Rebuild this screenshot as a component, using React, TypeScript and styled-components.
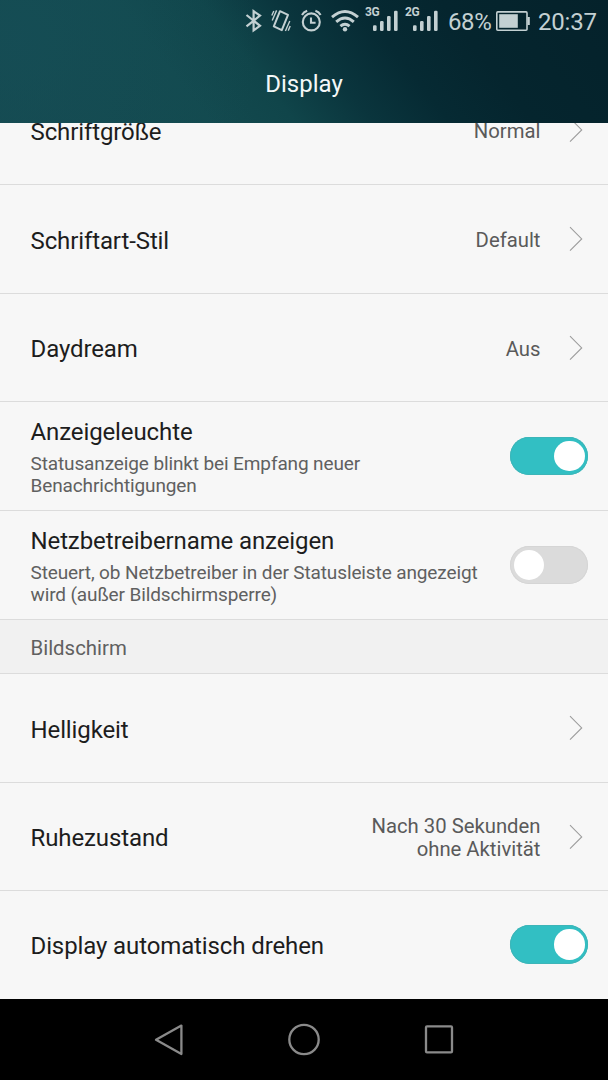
import React from "react";
import styled, { createGlobalStyle } from "styled-components";

const GlobalStyle = createGlobalStyle`
  * { box-sizing: border-box; }
  body { margin: 0; background: #000; font-family: Roboto, "Liberation Sans", sans-serif; }
`;

const Screen = styled.div`
  width: 608px;
  height: 1080px;
  display: flex;
  flex-direction: column;
  overflow: hidden;
  background: #f7f7f7;
`;

const Header = styled.header`
  flex: none;
  height: 123px;
  display: flex;
  flex-direction: column;
  background:
    radial-gradient(ellipse 240px 260px at 20px 40px, rgba(22, 80, 90, 0.5), rgba(22, 80, 90, 0) 100%),
    linear-gradient(52deg, #15494f 0%, #134a4f 30%, #10454a 42%, #0a353d 53%, #062a33 64%, #05252e 76%, #05222b 100%);
`;

const StatusBar = styled.div`
  height: 43px;
  padding: 0 11px 0 245px;
  display: flex;
  align-items: flex-start;
  color: #c3d0d2;
`;

const StatusIcon = styled.svg<{ $gap?: number }>`
  flex: none;
  display: block;
  margin-right: ${(p) => p.$gap ?? 0}px;
  overflow: visible;
`;

const Signal = styled.div<{ $gap: number }>`
  flex: none;
  width: 33px;
  height: 32px;
  display: flex;
  margin-right: ${(p) => p.$gap}px;
`;

const Network = styled.span`
  width: 8px;
  padding-top: 6px;
  font-size: 12px;
  font-weight: 700;
  line-height: 13px;
  letter-spacing: -0.4px;
  white-space: nowrap;
`;

const StatusText = styled.span<{ $width: number; $spacing: number }>`
  flex: none;
  width: ${(p) => p.$width}px;
  padding-top: 8px;
  font-size: 24px;
  font-weight: 400;
  line-height: 28px;
  letter-spacing: ${(p) => p.$spacing}px;
  white-space: nowrap;
`;

const Title = styled.h1`
  margin: 0;
  padding-top: 26px;
  color: #f4f8f8;
  font-size: 24px;
  font-weight: 400;
  line-height: 30px;
  text-align: center;
`;

const List = styled.main`
  flex: none;
  height: 876px;
  display: flex;
  flex-direction: column;
  justify-content: flex-end;
  overflow: hidden;
`;

const Row = styled.section<{ $height: number; $last?: boolean }>`
  flex: none;
  height: ${(p) => p.$height}px;
  padding: 0 20px 0 30.5px;
  display: flex;
  align-items: center;
  justify-content: space-between;
  border-bottom: 1px solid ${(p) => (p.$last ? "#f7f7f7" : "#dcdcdc")};
`;

const Texts = styled.div`
  display: flex;
  flex-direction: column;
  padding-top: 3px;
`;

const Label = styled.div`
  color: #1d1d1d;
  font-size: 24px;
  line-height: 30px;
  letter-spacing: -0.11px;
  white-space: nowrap;
`;

const Description = styled.div`
  padding: 6px 0 2px;
  color: #606060;
  font-size: 19px;
  line-height: 22px;
  letter-spacing: -0.12px;
  white-space: pre;
`;

const Side = styled.div`
  display: flex;
  align-items: center;
`;

const Value = styled.div`
  padding-top: 3px;
  color: #5a5a5a;
  font-size: 20.3px;
  line-height: 23px;
  text-align: right;
  white-space: pre;
`;

const Arrow = styled.svg`
  display: block;
  margin: 0 5px 0 28.5px;
`;

const Toggle = styled.div<{ $on: boolean }>`
  width: 78px;
  height: 38.5px;
  padding: 0 3.5px;
  border-radius: 20px;
  display: flex;
  align-items: center;
  justify-content: ${(p) => (p.$on ? "flex-end" : "flex-start")};
  background: ${(p) => (p.$on ? "#32bfc3" : "#dbdbdb")};
  box-shadow: inset 0 0 0 1px ${(p) => (p.$on ? "#3db5b8" : "#d5d5d5")};
`;

const Knob = styled.div`
  width: 30.5px;
  height: 30.5px;
  border-radius: 50%;
  background: #fff;
`;

const Section = styled.h2`
  flex: none;
  margin: 0;
  height: 54px;
  padding: 2px 30.5px 0;
  display: flex;
  align-items: center;
  background: #f1f1f1;
  border-bottom: 1px solid #dcdcdc;
  color: #606060;
  font-size: 20.4px;
  font-weight: 400;
`;

const NavBar = styled.nav`
  flex: none;
  height: 81px;
  display: flex;
  align-items: center;
  justify-content: center;
  gap: 101px;
  background: #000;
`;

const NavIcon = styled.svg`
  display: block;
  width: 34px;
  height: 33px;
  fill: none;
  stroke: #8a8a8a;
  stroke-width: 2.3;
  stroke-linejoin: round;
`;

const Chevron = () => (
  <Arrow width="14" height="26" viewBox="0 0 14 26" fill="none" stroke="#9c9c9c" strokeWidth="1.1">
    <path d="M1 1.2L12.7 12.9L1 24.6" />
  </Arrow>
);

const Bars = () => (
  <StatusIcon width="25" height="32" viewBox="0 0 25 32" fill="currentColor">
    <rect x="0" y="25.3" width="3.6" height="5.7" rx="1.2" />
    <rect x="7" y="21" width="3.6" height="10" rx="1.2" />
    <rect x="14" y="16" width="3.6" height="15" rx="1.2" />
    <rect x="21" y="10.7" width="3.6" height="20.3" rx="1.2" />
  </StatusIcon>
);

interface Setting {
  label: string;
  height: number;
  description?: string;
  value?: string;
  on?: boolean;
  last?: boolean;
}

const general: Setting[] = [
  { label: "Schriftgröße", value: "Normal", height: 109 },
  { label: "Schriftart-Stil", value: "Default", height: 109 },
  { label: "Daydream", value: "Aus", height: 108 },
  {
    label: "Anzeigeleuchte",
    description: "Statusanzeige blinkt bei Empfang neuer\nBenachrichtigungen",
    on: true,
    height: 109,
  },
  {
    label: "Netzbetreibername anzeigen",
    description: "Steuert, ob Netzbetreiber in der Statusleiste angezeigt\nwird (außer Bildschirmsperre)",
    on: false,
    height: 109,
  },
];

const display: Setting[] = [
  { label: "Helligkeit", height: 109 },
  { label: "Ruhezustand", value: "Nach 30 Sekunden\nohne Aktivität", height: 108 },
  { label: "Display automatisch drehen", on: true, height: 108, last: true },
];

const SettingRow = ({ label, description, value, on, height, last }: Setting) => (
  <Row $height={height} $last={last}>
    <Texts>
      <Label>{label}</Label>
      {description && <Description>{description}</Description>}
    </Texts>
    {on === undefined ? (
      <Side>
        {value && <Value>{value}</Value>}
        <Chevron />
      </Side>
    ) : (
      <Toggle $on={on}>
        <Knob />
      </Toggle>
    )}
  </Row>
);

export default function App() {
  return (
    <>
      <GlobalStyle />
      <Screen>
        <Header>
          <StatusBar>
            <StatusIcon $gap={9} width="17" height="40" viewBox="0 0 17 40" fill="none" stroke="currentColor" strokeWidth="2.2">
              <path d="M1.5 15L15 25.8L8.6 30.4V11.2L15 15.6L1.5 26.4" />
            </StatusIcon>
            <StatusIcon $gap={10} width="20" height="40" viewBox="0 0 20 40" fill="none" stroke="currentColor">
              <path strokeWidth="2" strokeLinejoin="round" d="M9 11.2L17 14.9L10.8 30.1L2.8 26.4Z" />
              <path strokeWidth="1.4" d="M5.6 10.4L1.2 20.5M2.8 11L.8 15.5M18.8 21L14.4 31M19.2 26L17.2 30.6" />
            </StatusIcon>
            <StatusIcon $gap={9} width="21" height="40" viewBox="0 0 21 40" fill="none" stroke="currentColor" strokeWidth="2.1">
              <circle cx="10.3" cy="21.9" r="8.5" />
              <path d="M10 17.5V22.7H14.6M1 15Q2.6 12 6.2 10.8M14.4 10.8Q18 12 19.6 15" />
            </StatusIcon>
            <StatusIcon $gap={6} width="28" height="40" viewBox="0 0 28 40" fill="none" stroke="currentColor" strokeWidth="2.9">
              <path d="M1 17.2Q14 5.8 27 17.2M5.2 21.8Q14 14 22.8 21.8M9.4 26.2Q14 22.4 18.6 26.2" />
              <circle cx="14" cy="29.3" r="2.2" fill="currentColor" stroke="none" />
            </StatusIcon>
            <Signal $gap={7}>
              <Network>3G</Network>
              <Bars />
            </Signal>
            <Signal $gap={10}>
              <Network>2G</Network>
              <Bars />
            </Signal>
            <StatusText $width={48} $spacing={-0.4}>68%</StatusText>
            <StatusIcon $gap={8} width="34" height="40" viewBox="0 0 34 40" fill="none">
              <rect x="0.8" y="11.9" width="30.2" height="18.3" rx="1" stroke="currentColor" strokeWidth="1.6" />
              <rect x="3.2" y="14.2" width="18.6" height="13.6" fill="currentColor" />
              <path d="M31.5 17h2.3v8h-2.3z" fill="currentColor" />
            </StatusIcon>
            <StatusText $width={60} $spacing={-0.2}>20:37</StatusText>
          </StatusBar>
          <Title>Display</Title>
        </Header>
        <List>
          {general.map((s) => (
            <SettingRow key={s.label} {...s} />
          ))}
          <Section>Bildschirm</Section>
          {display.map((s) => (
            <SettingRow key={s.label} {...s} />
          ))}
        </List>
        <NavBar>
          <NavIcon viewBox="0 0 34 33">
            <path d="M29.4 2.6V31L4 16.8Z" />
          </NavIcon>
          <NavIcon viewBox="0 0 34 33">
            <circle cx="17" cy="16.5" r="14.7" />
          </NavIcon>
          <NavIcon viewBox="0 0 34 33">
            <rect x="4" y="3.4" width="26" height="26" rx="1" />
          </NavIcon>
        </NavBar>
      </Screen>
    </>
  );
}
